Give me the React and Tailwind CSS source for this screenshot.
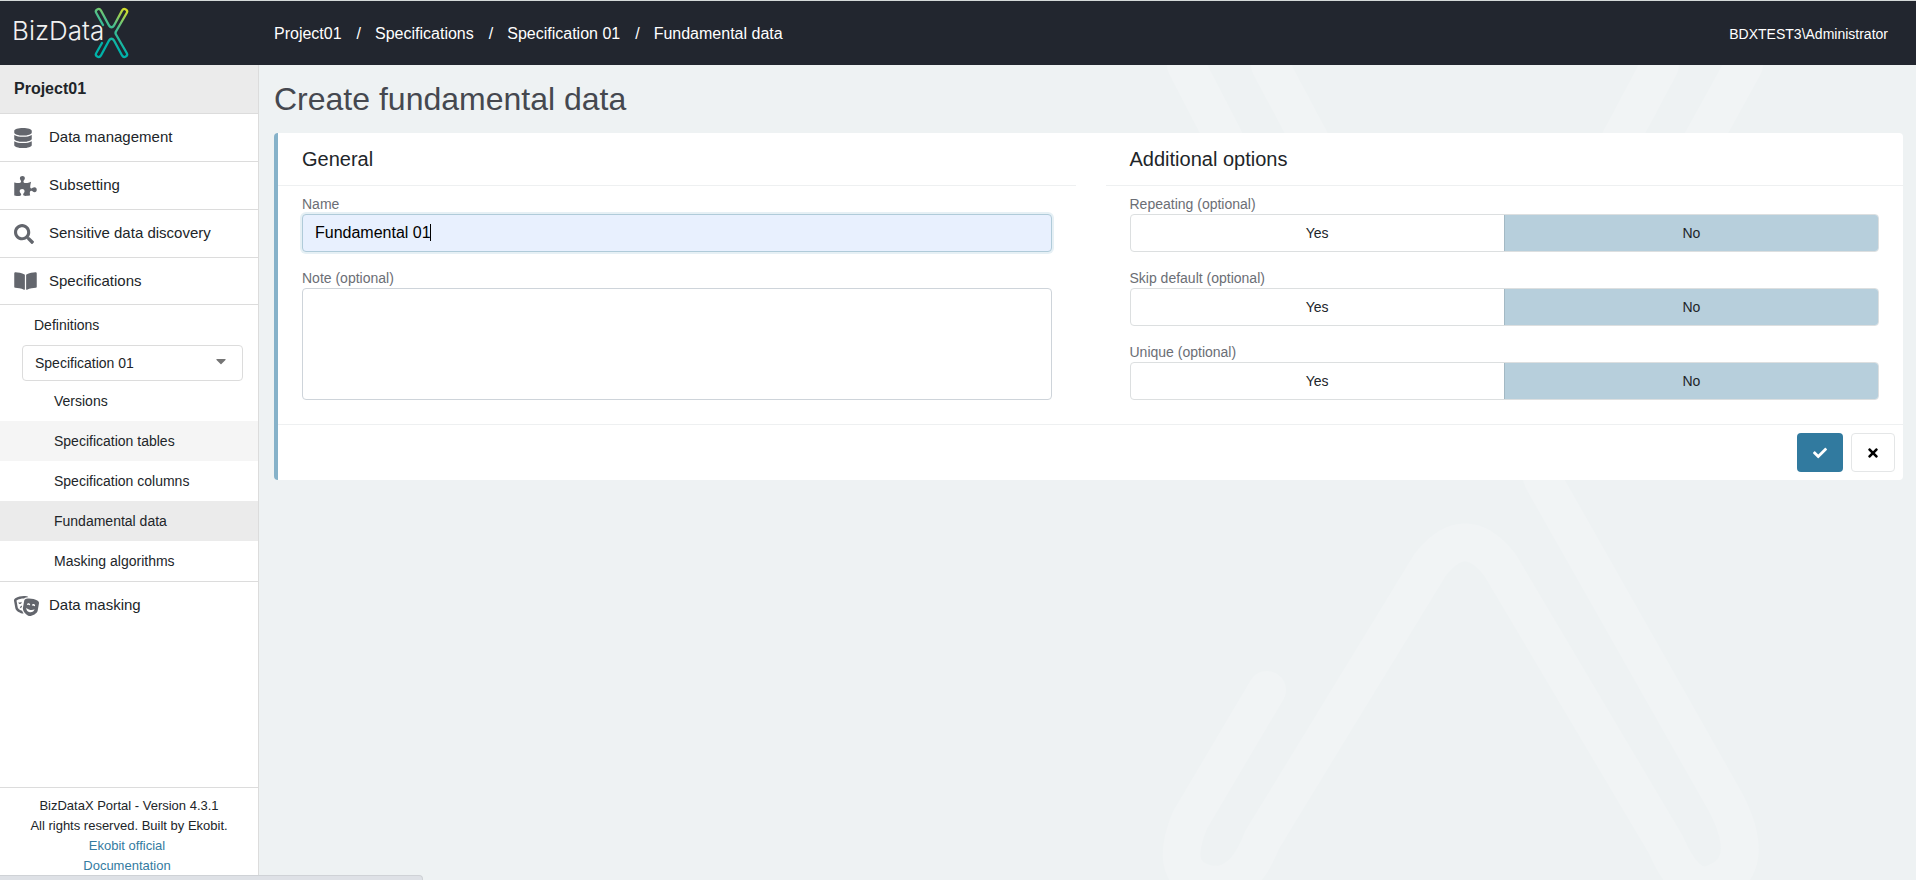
import { useState } from "react";
import {
  FaBookOpen,
  FaCaretDown,
  FaCheck,
  FaDatabase,
  FaPuzzlePiece,
  FaSearch,
  FaTheaterMasks,
  FaTimes,
} from "react-icons/fa";

const crumbs = ["Project01", "Specifications", "Specification 01", "Fundamental data"];

const initialName = "Fundamental 01";

const mainItems = [
  { label: "Data management", icon: FaDatabase, row: "h-12", size: "w-[18px]" },
  { label: "Subsetting", icon: FaPuzzlePiece, row: "h-12", size: "w-[23px]" },
  { label: "Sensitive data discovery", icon: FaSearch, row: "h-12", size: "w-5" },
  { label: "Specifications", icon: FaBookOpen, row: "h-[47px]", size: "w-[23px]" },
];

const specItems = [
  { label: "Versions", bg: "" },
  { label: "Specification tables", bg: "bg-[#f5f5f5]" },
  { label: "Specification columns", bg: "" },
  { label: "Fundamental data", bg: "bg-[#ebebeb]" },
  { label: "Masking algorithms", bg: "" },
];

function Logo() {
  return (
    <a href="#home" aria-label="BizDataX" className="block">
      <svg width="120" height="52" viewBox="-4 0 120 52" fill="none">
        <defs>
          <linearGradient id="logoX" x1="112" y1="2" x2="92" y2="34" gradientUnits="userSpaceOnUse">
            <stop offset="0" stopColor="#d3dc2a" />
            <stop offset="0.5" stopColor="#4fbf8b" />
            <stop offset="1" stopColor="#00b2a9" />
          </linearGradient>
        </defs>
        <text
          x="-1"
          y="33"
          fill="#f1f1f1"
          fontFamily="Inter, sans-serif"
          fontWeight="300"
          fontSize="26"
        >
          BizData
        </text>
        <g stroke="url(#logoX)" strokeWidth="2.3" strokeLinecap="round" strokeLinejoin="round">
          <path d="M90 18 L83.300 6 A2.600 2.600 0 0 1 87.800 3.300 L96 18.500 Q98.500 22 101 18.500 L109.200 3.300 A2.600 2.600 0 0 1 113.700 6 L103 24.500 Q102 26 103 27.500 L113.700 46 A2.600 2.600 0 0 1 109.200 48.700 L101 33.500 Q98.500 30 96 33.500 L87.800 48.700 A2.600 2.600 0 0 1 83.300 46 L89 36" />
        </g>
      </svg>
    </a>
  );
}

function Watermark() {
  return (
    <svg
      className="absolute top-0 right-0 h-[815px] w-[816px]"
      viewBox="1100 65 816 815"
      fill="none"
      stroke="#f1f4f5"
      strokeWidth="38"
      strokeLinecap="round"
      strokeLinejoin="round"
      aria-hidden="true"
    >
      <path d="M1186 65 L1390 460 M1270 65 L1440 385 Q1465 420 1490 385 L1660 65 M1744 65 L1543 430 Q1533 455 1543 480 L1726 803 Q1760 870 1710 885 Q1685 890 1666 845 L1500 565 Q1465 520 1430 565 L1262 840 Q1245 885 1215 885 Q1165 880 1190 820 L1267 690" />
    </svg>
  );
}

function Sidebar() {
  return (
    <aside className="flex w-[259px] shrink-0 flex-col border-r border-[#dcdcdc] bg-white">
      <div className="flex h-[49px] items-center border-b border-[#dcdcdc] bg-[#ebebeb] px-3.5 text-base font-bold">
        Project01
      </div>
      <nav className="flex-1">
        {mainItems.map(({ label, icon: Icon, row, size }) => (
          <a
            key={label}
            href="#nav"
            className={`flex items-center border-b border-[#dcdcdc] px-3.5 text-[15px] ${row}`}
          >
            <span className="flex w-[35px]">
              <Icon className={`h-5 text-[#63666d] ${size}`} />
            </span>
            {label}
          </a>
        ))}
        <div className="border-b border-[#dcdcdc]">
          <a href="#definitions" className="flex h-10 items-center pl-[34px] text-sm">
            Definitions
          </a>
          <div className="relative mr-[15px] ml-[22px]">
            <select
              aria-label="Specification"
              className="block h-9 w-full appearance-none rounded border border-[#dcdcdc] bg-white px-3 text-sm"
            >
              <option>Specification 01</option>
            </select>
            <FaCaretDown className="pointer-events-none absolute top-2 right-3.5 h-4 w-4 text-[#757575]" />
          </div>
          {specItems.map((item) => (
            <a
              key={item.label}
              href="#spec"
              className={`flex h-10 items-center pl-[54px] text-sm ${item.bg}`}
            >
              {item.label}
            </a>
          ))}
        </div>
        <a href="#masking" className="flex h-[47px] items-center px-3.5 text-[15px]">
          <span className="flex w-[35px]">
            <FaTheaterMasks className="h-5 w-[25px] text-[#63666d]" />
          </span>
          Data masking
        </a>
      </nav>
      <footer className="border-t border-[#dcdcdc] px-2 pt-2 pb-1 text-center text-[13px] leading-5">
        <p>BizDataX Portal - Version 4.3.1</p>
        <p>All rights reserved. Built by Ekobit.</p>
        <p className="mr-1">
          <a href="#ekobit" className="text-[#347ba1]">Ekobit official</a>
        </p>
        <p className="mr-1">
          <a href="#docs" className="text-[#347ba1]">Documentation</a>
        </p>
      </footer>
    </aside>
  );
}

function YesNo({ label, name }) {
  const [value, setValue] = useState("No");

  return (
    <fieldset className="mb-4 last:mb-0">
      <legend className="block h-5 text-sm leading-[21px] text-[#6b6e75]">{label}</legend>
      <div className="flex h-[38px] overflow-hidden rounded border border-[#dcdfe0]">
        {["Yes", "No"].map((option) => (
          <label
            key={option}
            className="flex flex-1 cursor-pointer items-center justify-center text-sm last:border-l last:border-[#a3b9c4] has-checked:bg-[#b7cfdc]"
          >
            <input
              type="radio"
              name={name}
              checked={value === option}
              onChange={() => setValue(option)}
              className="sr-only"
            />
            {option}
          </label>
        ))}
      </div>
    </fieldset>
  );
}

export default function App() {
  const [name, setName] = useState(initialName);
  const [note, setNote] = useState("");

  return (
    <div className="relative flex min-h-screen flex-col border-t border-[#d5d9d9] bg-[#eef2f3] font-['Liberation_Sans',Arial,sans-serif] text-[#212529]">
      <header className="flex h-16 items-center bg-[#22262f] text-white">
        <div className="w-[274px] pl-[9px]">
          <Logo />
        </div>
        <nav className="flex flex-1 gap-[15px] pt-0.5 text-base">
          {crumbs.map((crumb, i) => (
            <span key={crumb} className="flex gap-[14px]">
              {i > 0 && <span>/</span>}
              <a href="#crumb">{crumb}</a>
            </span>
          ))}
        </nav>
        <span className="pt-0.5 pr-7 text-sm">BDXTEST3\Administrator</span>
      </header>

      <div className="flex flex-1">
        <Sidebar />
        <main className="relative flex-1 overflow-hidden pr-[13px] pl-[15px]">
          <Watermark />
          <div className="relative">
            <h1 className="flex h-[68px] items-center text-[32px] text-[#45484f]">
              Create fundamental data
            </h1>
            <form
              className="rounded border-l-4 border-[#86b2c9] bg-white"
              onSubmit={(e) => e.preventDefault()}
            >
              <div className="grid grid-cols-2 gap-[30px]">
                <section>
                  <h2 className="flex h-[53px] items-center border-b border-[#eef0f1] px-6 text-xl">
                    General
                  </h2>
                  <div className="px-6 pt-2 pb-6">
                    <label htmlFor="name" className="block h-5 text-sm leading-[21px] text-[#6b6e75]">
                      Name
                    </label>
                    <div className="relative mb-4">
                      <input
                        id="name"
                        type="text"
                        value={name}
                        onChange={(e) => setName(e.target.value)}
                        className="block h-[38px] w-full rounded border border-[#b0cbd9] bg-[#e8f0fe] px-3 text-base text-black ring-2 ring-[#e6f0f5] outline-none"
                      />
                      {/* text cursor, until the user types */}
                      {name === initialName && (
                        <span className="pointer-events-none absolute top-2.5 left-32 h-[17px] w-px bg-black" />
                      )}
                    </div>
                    <label htmlFor="note" className="block h-5 text-sm leading-[21px] text-[#6b6e75]">
                      Note (optional)
                    </label>
                    <textarea
                      id="note"
                      value={note}
                      onChange={(e) => setNote(e.target.value)}
                      className="block h-28 w-full resize-none rounded border border-[#ced4da] px-3 py-2 outline-none"
                    />
                  </div>
                </section>
                <section>
                  <h2 className="flex h-[53px] items-center border-b border-[#eef0f1] px-6 text-xl">
                    Additional options
                  </h2>
                  <div className="px-6 pt-2 pb-6">
                    <YesNo label="Repeating (optional)" name="repeating" />
                    <YesNo label="Skip default (optional)" name="skipDefault" />
                    <YesNo label="Unique (optional)" name="unique" />
                  </div>
                </section>
              </div>
              <div className="flex justify-end gap-2 border-t border-[#eef0f1] p-2">
                <button
                  type="submit"
                  aria-label="Save"
                  className="flex h-[39px] w-[46px] items-center justify-center rounded bg-[#317a9f] text-white"
                >
                  <FaCheck className="h-3.5 w-3.5" />
                </button>
                <button
                  type="button"
                  aria-label="Cancel"
                  className="flex h-[39px] w-11 items-center justify-center rounded border border-[#e4e6e7] bg-white text-black"
                >
                  <FaTimes className="h-3.5 w-3.5" />
                </button>
              </div>
            </form>
          </div>
        </main>
      </div>

      {/* link status strip along the window's bottom edge */}
      <div className="absolute bottom-0 left-0 h-[5px] w-[423px] rounded-tr border-t border-r border-[#cfd2d6] bg-[#dee1e6]" />
    </div>
  );
}
